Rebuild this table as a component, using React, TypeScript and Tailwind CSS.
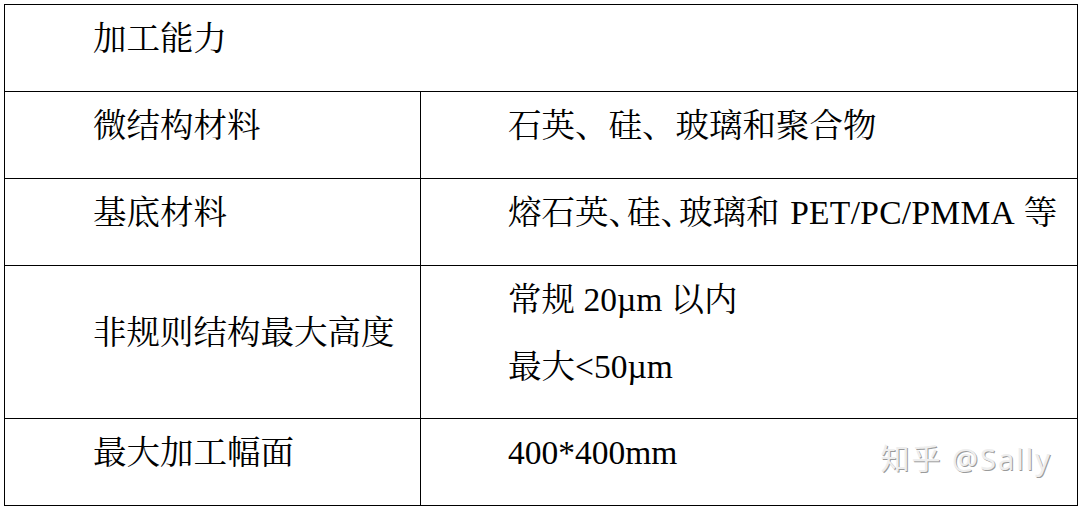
import React from "react";

const FONT = {
  fontFamily:
    "'Liberation Serif', 'Noto Serif CJK SC', 'Noto Sans CJK SC', serif",
};

function Cell({
  children,
  className = "",
}: {
  children: React.ReactNode;
  className?: string;
}) {
  return (
    <div
      className={`flex flex-col justify-center pb-[19px] text-[33.5px] leading-[67px] text-black ${className}`}
    >
      {children}
    </div>
  );
}

function L({
  children,
  className = "",
}: {
  children: React.ReactNode;
  className?: string;
}) {
  return (
    <span className={`font-['Liberation_Serif'] ${className}`}>{children}</span>
  );
}

export default function App() {
  return (
    <div className="h-[510px] w-[1082px] bg-white pl-[4px] pt-[4px]" style={FONT}>
      <div className="w-[1074px] border border-black">
        <div className="flex h-[87px] border-b border-black">
          <Cell className="pl-[88px]">加工能力</Cell>
        </div>

        <div className="flex h-[87px] border-b border-black">
          <Cell className="w-[416px] shrink-0 border-r border-black pl-[88px]">
            微结构材料
          </Cell>
          <Cell className="pl-[87px]">石英、硅、玻璃和聚合物</Cell>
        </div>

        <div className="flex h-[87px] border-b border-black">
          <Cell className="w-[416px] shrink-0 border-r border-black pl-[88px]">
            基底材料
          </Cell>
          <Cell className="whitespace-nowrap pl-[87px]">
            <span>
              熔石英<span className="tracking-[-15px]">、</span>硅
              <span className="tracking-[-15px]">、</span>玻璃和
              <L className="tracking-[0.3px] [word-spacing:2px]">
                {" PET/PC/PMMA "}
              </L>
              等
            </span>
          </Cell>
        </div>

        <div className="flex h-[153px] border-b border-black">
          <Cell className="w-[416px] shrink-0 border-r border-black pl-[88px]">
            非规则结构最大高度
          </Cell>
          <Cell className="pl-[87px]">
            <div>
              常规<L>{" 20\u00B5m "}</L>以内
            </div>
            <div>
              最大<L>{"<50\u00B5m"}</L>
            </div>
          </Cell>
        </div>

        <div className="flex h-[86px]">
          <Cell className="w-[416px] shrink-0 border-r border-black pl-[88px]">
            最大加工幅面
          </Cell>
          <div className="flex flex-1 items-start justify-between pr-[25px]">
            <div className="pl-[87px] text-[33.5px] leading-[67px] text-black">
              <L>400*400mm</L>
            </div>
            <div
              className="mt-[22px] text-[29px] leading-[36px] tracking-[2px] text-[#eeeeee]"
              style={{
                fontFamily: "'Noto Sans', 'Noto Sans CJK SC', sans-serif",
                textShadow: "1px 1px 0 #9a9a9a",
              }}
            >
              知乎 @Sally
            </div>
          </div>
        </div>
      </div>
    </div>
  );
}
